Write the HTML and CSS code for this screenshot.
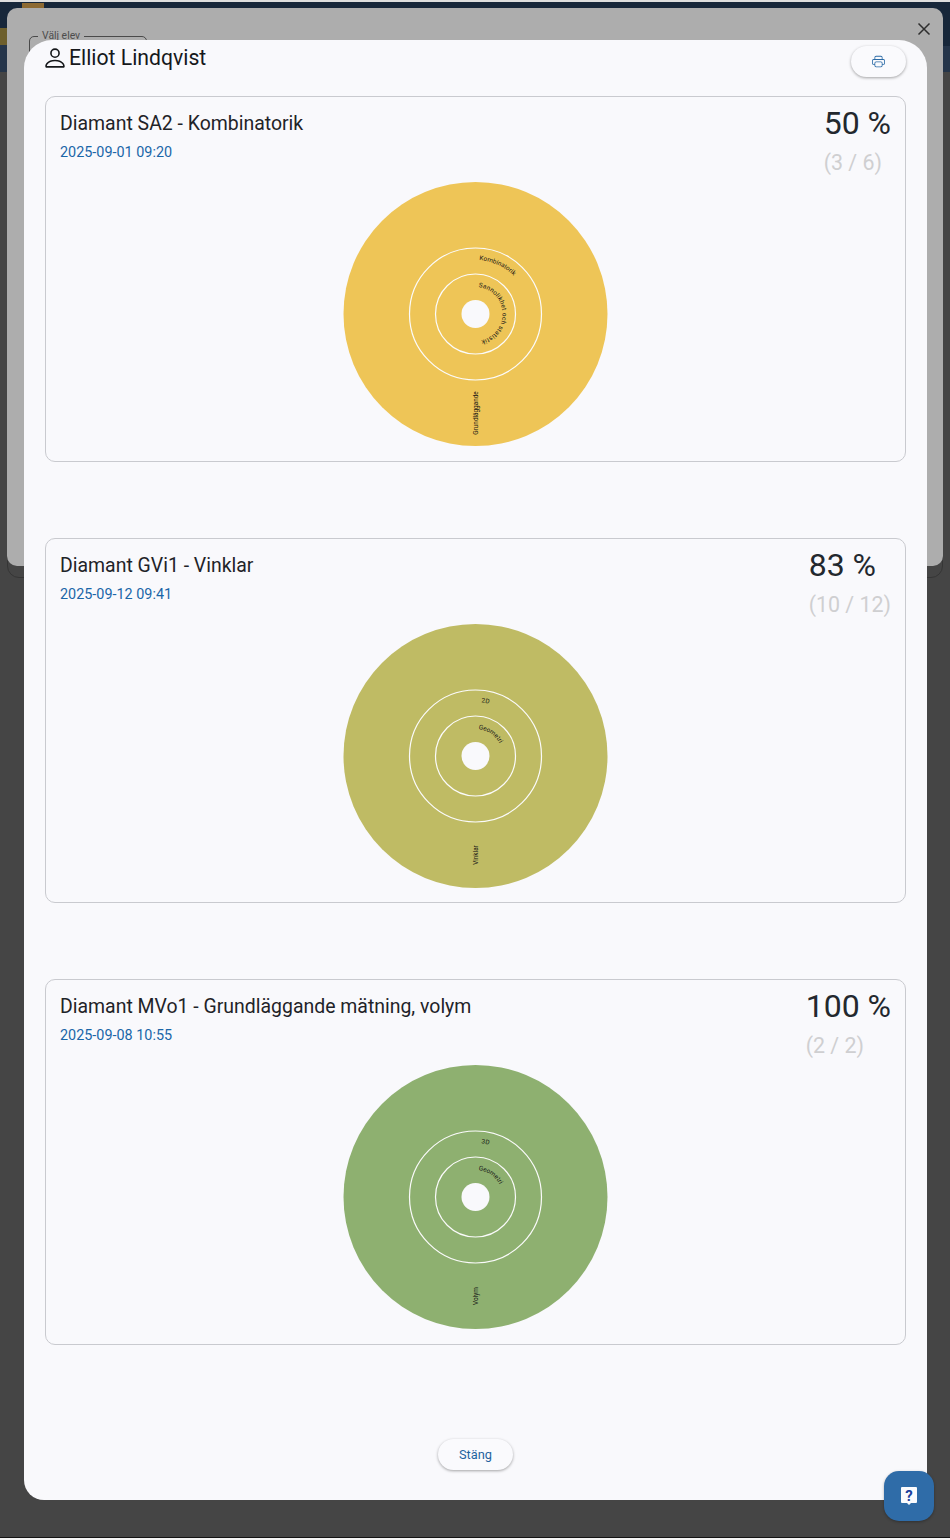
FILE: index.html
```html
<!DOCTYPE html>
<html lang="sv">
<head>
<meta charset="utf-8">
<title>Elliot Lindqvist</title>
<link rel="stylesheet" href="styles.css">
</head>
<body>
<div class="topstrip"></div>
<div class="appbar"><span class="logo"></span></div>
<div class="sideband sideband-left"></div>
<div class="sideband sideband-right"></div>
<div class="under-outline"></div>
<div class="under-dialog">
  <div class="select-box"><span class="select-label">Välj elev</span></div>
  <svg class="close-icon" viewBox="0 0 14 14"><path d="M1.5 1.5l11 11M12.5 1.5l-11 11"/></svg>
</div>

<main class="modal">
  <header class="modal-head">
    <h1 class="student">
      <svg class="person-icon" viewBox="0 0 16 16"><path d="M8 8a3 3 0 1 0 0-6 3 3 0 0 0 0 6Zm2-3a2 2 0 1 1-4 0 2 2 0 0 1 4 0Zm4 8c0 1-1 1-1 1H3s-1 0-1-1 1-4 6-4 6 3 6 4Zm-1-.004c-.001-.246-.154-.986-.832-1.664C11.516 10.68 10.289 10 8 10c-2.29 0-3.516.68-4.168 1.332-.678.678-.83 1.418-.832 1.664h10Z"/></svg>
      Elliot Lindqvist
    </h1>
    <button class="pill print-btn" aria-label="Skriv ut">
      <svg class="print-icon" viewBox="0 0 16 16"><path d="M5 1a2 2 0 0 0-2 2v2H2a2 2 0 0 0-2 2v3a2 2 0 0 0 2 2h1v1a2 2 0 0 0 2 2h6a2 2 0 0 0 2-2v-1h1a2 2 0 0 0 2-2V7a2 2 0 0 0-2-2h-1V3a2 2 0 0 0-2-2H5zM4 3a1 1 0 0 1 1-1h6a1 1 0 0 1 1 1v2H4V3zm1 5a2 2 0 0 0-2 2v1H2a1 1 0 0 1-1-1V7a1 1 0 0 1 1-1h12a1 1 0 0 1 1 1v3a1 1 0 0 1-1 1h-1v-1a2 2 0 0 0-2-2H5zm7 2v3a1 1 0 0 1-1 1H5a1 1 0 0 1-1-1v-3a1 1 0 0 1 1-1h6a1 1 0 0 1 1 1z"/></svg>
    </button>
  </header>

  <section class="cards">
    <article class="card">
      <div class="card-top">
        <div>
          <h2 class="card-title">Diamant SA2 - Kombinatorik</h2>
          <div class="card-date">2025-09-01 09:20</div>
        </div>
        <div class="score">
          <div class="percent">50 %</div>
          <div class="fraction">(3 / 6)</div>
        </div>
      </div>
      <svg class="disc" viewBox="0.5 0 264 264">
        <defs>
          <path id="outer-a" d="M132 78a54 54 0 1 1-.01 0"/>
          <path id="inner-a" d="M132 105a27 27 0 1 1-.01 0"/>
        </defs>
        <circle class="disc-bg yellow" cx="132" cy="132" r="132"/>
        <circle class="ring" cx="132" cy="132" r="66"/>
        <circle class="ring" cx="132" cy="132" r="40"/>
        <circle class="hole" cx="132" cy="132" r="14"/>
        <text class="lbl"><textPath href="#outer-a" startOffset="4">Kombinatorik</textPath></text>
        <text class="lbl lbl-wide"><textPath href="#inner-a" startOffset="3">Sannolikhet och statistik</textPath></text>
        <text class="lbl" text-anchor="middle" transform="translate(134 231) rotate(-90)">Grundläggande</text>
      </svg>
    </article>

    <article class="card">
      <div class="card-top">
        <div>
          <h2 class="card-title">Diamant GVi1 - Vinklar</h2>
          <div class="card-date">2025-09-12 09:41</div>
        </div>
        <div class="score">
          <div class="percent">83 %</div>
          <div class="fraction">(10 / 12)</div>
        </div>
      </div>
      <svg class="disc" viewBox="0.5 0 264 264">
        <defs>
          <path id="outer-b" d="M132 78a54 54 0 1 1-.01 0"/>
          <path id="inner-b" d="M132 105a27 27 0 1 1-.01 0"/>
        </defs>
        <circle class="disc-bg olive" cx="132" cy="132" r="132"/>
        <circle class="ring" cx="132" cy="132" r="66"/>
        <circle class="ring" cx="132" cy="132" r="40"/>
        <circle class="hole" cx="132" cy="132" r="14"/>
        <text class="lbl"><textPath href="#outer-b" startOffset="6">2D</textPath></text>
        <text class="lbl"><textPath href="#inner-b" startOffset="3">Geometri</textPath></text>
        <text class="lbl" text-anchor="middle" transform="translate(134 231) rotate(-90)">Vinklar</text>
      </svg>
    </article>

    <article class="card">
      <div class="card-top">
        <div>
          <h2 class="card-title">Diamant MVo1 - Grundläggande mätning, volym</h2>
          <div class="card-date">2025-09-08 10:55</div>
        </div>
        <div class="score">
          <div class="percent">100 %</div>
          <div class="fraction">(2 / 2)</div>
        </div>
      </div>
      <svg class="disc" viewBox="0.5 0 264 264">
        <defs>
          <path id="outer-c" d="M132 78a54 54 0 1 1-.01 0"/>
          <path id="inner-c" d="M132 105a27 27 0 1 1-.01 0"/>
        </defs>
        <circle class="disc-bg green" cx="132" cy="132" r="132"/>
        <circle class="ring" cx="132" cy="132" r="66"/>
        <circle class="ring" cx="132" cy="132" r="40"/>
        <circle class="hole" cx="132" cy="132" r="14"/>
        <text class="lbl"><textPath href="#outer-c" startOffset="6">3D</textPath></text>
        <text class="lbl"><textPath href="#inner-c" startOffset="3">Geometri</textPath></text>
        <text class="lbl" text-anchor="middle" transform="translate(134 231) rotate(-90)">Volym</text>
      </svg>
    </article>
  </section>

  <footer class="modal-foot">
    <button class="pill close-btn">Stäng</button>
  </footer>
</main>

<button class="help-btn" aria-label="Hjälp">
  <svg class="help-icon" viewBox="0 0 18 20">
    <path class="help-bubble" d="M2 1h14a1 1 0 0 1 1 1v14a1 1 0 0 1-1 1h-5l-2 2-2-2H2a1 1 0 0 1-1-1V2a1 1 0 0 1 1-1z"/>
    <text class="help-mark" x="9" y="14.5" text-anchor="middle">?</text>
  </svg>
</button>
<div class="bottomstrip"></div>
</body>
</html>
```
FILE: styles.css
```css
* { box-sizing: border-box; }

html, body {
  margin: 0;
  padding: 0;
}

body {
  position: relative;
  width: 950px;
  height: 1540px;
  overflow: hidden;
  background: #454545;
  font-family: Roboto, "Liberation Sans", sans-serif;
  color: #1f2328;
}

.topstrip {
  position: absolute;
  top: 0;
  left: 0;
  right: 0;
  height: 2px;
  background: #dedede;
}

.bottomstrip {
  position: absolute;
  left: 0;
  right: 0;
  bottom: 0;
  height: 3px;
  border-top: 1px solid #141414;
  background: #f4f4f4;
}

.appbar {
  position: absolute;
  top: 2px;
  left: 0;
  right: 0;
  height: 44px;
  background: #17273a;
}

.logo {
  position: absolute;
  left: 22px;
  top: 1px;
  width: 22px;
  height: 6px;
  background: #8d6a33;
}

.sideband {
  position: absolute;
  width: 8px;
  top: 46px;
  height: 26px;
  background: #25354a;
}

.sideband-left {
  left: 0;
  top: 28px;
  height: 44px;
  background: linear-gradient(#6d5f2c 0 17px, #25354a 17px);
}

.sideband-right {
  right: 0;
}

.under-outline {
  position: absolute;
  left: 7px;
  right: 7px;
  top: 500px;
  height: 78px;
  border: 1px solid #353535;
  border-radius: 0 0 12px 12px;
}

.under-dialog {
  position: absolute;
  left: 7px;
  top: 8px;
  width: 936px;
  height: 558px;
  background: #adadad;
  border-radius: 10px;
}

.select-box {
  position: absolute;
  left: 22px;
  top: 28px;
  width: 118px;
  height: 40px;
  border: 1px solid #4a4a4a;
  border-radius: 5px;
}

.select-label {
  position: absolute;
  left: 8px;
  top: -8px;
  padding: 0 4px;
  background: #adadad;
  font-size: 10.4px;
  line-height: 14px;
  color: #4c4c4c;
}

.close-icon {
  position: absolute;
  left: 910px;
  top: 14px;
  width: 14px;
  height: 14px;
  fill: none;
  stroke: #2e2e2e;
  stroke-width: 1.5;
}

.modal {
  position: absolute;
  left: 24px;
  top: 40px;
  width: 903px;
  height: 1460px;
  padding: 0 21px;
  background: #f9f9fc;
  border-radius: 28px 28px 20px 20px;
  display: flex;
  flex-direction: column;
}

.modal-head {
  height: 56px;
  display: flex;
  align-items: flex-start;
  justify-content: space-between;
}

.student {
  margin: 4px 0 0;
  display: flex;
  align-items: center;
  gap: 4px;
  font-size: 21.2px;
  line-height: 28px;
  font-weight: 400;
  color: #16181b;
}

.person-icon {
  width: 20px;
  height: 24px;
  fill: #16181b;
  transform: scale(1.3);
}

.pill {
  border: 0;
  background: #fafafd;
  font-family: inherit;
  border-radius: 16px;
  box-shadow: 0 1px 3px rgba(0, 0, 0, 0.35);
  padding: 0;
  display: flex;
  align-items: center;
  justify-content: center;
}

.print-btn {
  width: 55px;
  height: 31px;
  margin-top: 6px;
}

.print-icon {
  width: 13px;
  height: 13px;
  fill: #2a6aa6;
}

.cards {
  display: flex;
  flex-direction: column;
  gap: 76px;
}

.card {
  height: 365.5px;
  border: 1px solid #c9cacf;
  border-radius: 10px;
  padding: 14px 14px 13px;
  position: relative;
  display: flex;
  flex-direction: column;
}

.card-top {
  display: flex;
  justify-content: space-between;
  align-items: flex-start;
  height: 71px;
}

.card-title {
  margin: 0;
  font-size: 19.45px;
  line-height: 26px;
  font-weight: 400;
  color: #1f2328;
}

.card-date {
  margin-top: 7px;
  font-size: 14.4px;
  line-height: 18px;
  color: #1a66a8;
}

.score {
  margin-top: -1px;
}

.percent {
  font-size: 32px;
  line-height: 26px;
  color: #23282e;
}

.fraction {
  margin-top: 14px;
  font-size: 21.4px;
  line-height: 26px;
  color: #cfcfd1;
}

.disc {
  display: block;
  width: 264px;
  height: 264px;
  align-self: center;
  overflow: visible;
}

.disc-bg.yellow { fill: #eec557; }
.disc-bg.olive { fill: #bfbb64; }
.disc-bg.green { fill: #8eb070; }

.ring {
  fill: none;
  stroke: #fbfbfb;
  stroke-width: 1.2;
}

.hole {
  fill: #f9f9fc;
}

.lbl {
  font-family: Roboto, "Liberation Sans", sans-serif;
  font-size: 6.4px;
  fill: #141414;
}

.lbl-wide {
  letter-spacing: 0.25px;
}

.modal-foot {
  margin-top: 94px;
  display: flex;
  justify-content: center;
}

.close-btn {
  width: 75px;
  height: 31px;
  font-size: 12.8px;
  color: #1f639f;
}

.help-btn {
  position: absolute;
  left: 884px;
  top: 1471px;
  width: 50px;
  height: 50px;
  border: 0;
  padding: 0;
  border-radius: 15px;
  background: #2f6ca8;
  box-shadow: 0 1px 3px rgba(0, 0, 0, 0.3);
  display: flex;
  align-items: center;
  justify-content: center;
}

.help-icon {
  width: 18px;
  height: 20px;
}

.help-bubble {
  fill: #fbfbfd;
}

.help-mark {
  font-family: Roboto, "Liberation Sans", sans-serif;
  font-size: 15px;
  font-weight: 700;
  fill: #1c3f9c;
}
```
